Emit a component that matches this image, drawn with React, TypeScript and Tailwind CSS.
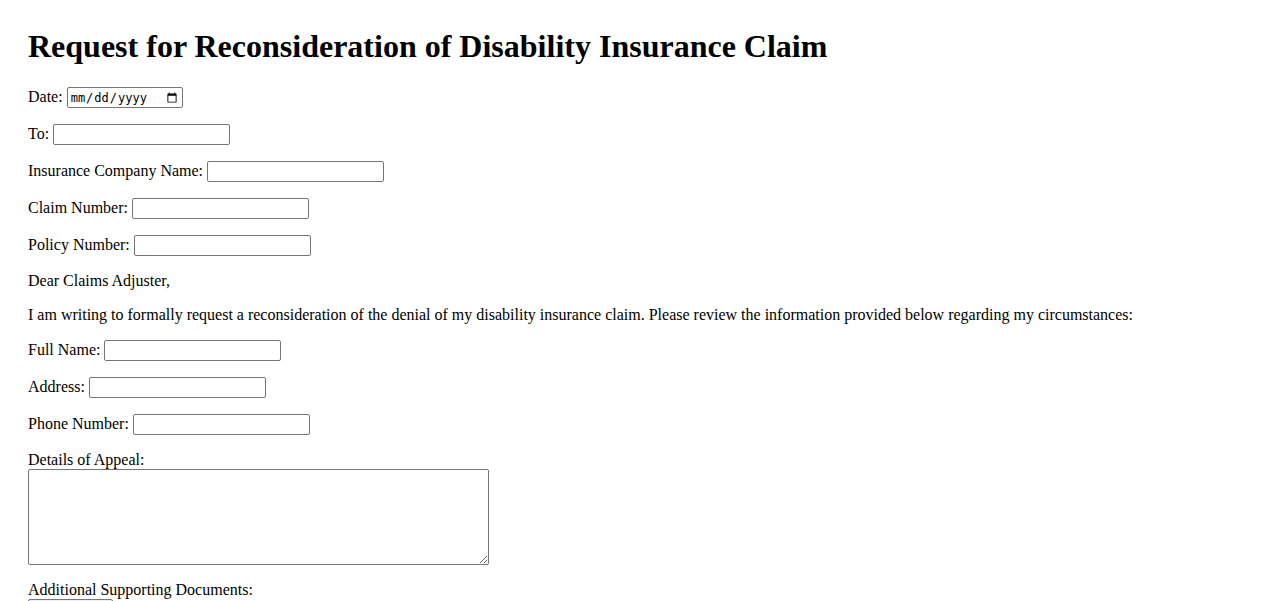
const inputCls =
  "h-[21px] w-[177px] border border-[#767676] rounded-[2px] bg-white px-[2px] py-[1px] text-[13.33px] font-['Liberation_Sans',Arial,sans-serif] text-black";

function Field({ label, type = 'text' }: { label: string; type?: string }) {
  return (
    <div className="mb-[16px]">
      <label>
        {label}{' '}
        <input type={type} className={inputCls} />
      </label>
    </div>
  );
}

export default function App() {
  return (
    <div className="min-h-screen bg-white px-[28px] pt-[28px] font-['Liberation_Serif','Times_New_Roman',serif] text-[16px] leading-[normal] text-black">
      <h1 className="mb-[22px] text-[32px] font-bold leading-[37px]">
        Request for Reconsideration of Disability Insurance Claim
      </h1>

      <div className="mb-[16px]">
        <label>
          Date:{' '}
          <input
            type="date"
            className="h-[21px] w-[116px] rounded-[2px] border border-[#767676] bg-white px-[2px] py-[1px] font-['DejaVu_Sans_Mono',monospace] text-[12px] text-black"
          />
        </label>
      </div>
      <Field label="To:" />
      <Field label="Insurance Company Name:" />
      <Field label="Claim Number:" />
      <Field label="Policy Number:" />

      <p className="mb-[16px]">Dear Claims Adjuster,</p>
      <p className="mb-[16px]">
        I am writing to formally request a reconsideration of the denial of my disability insurance claim. Please
        review the information provided below regarding my circumstances:
      </p>

      <Field label="Full Name:" />
      <Field label="Address:" />
      <Field label="Phone Number:" />

      <div className="mb-[12px]">
        <label>
          Details of Appeal:
          <br />
          <textarea className="h-[96px] w-[461px] rounded-[2px] border border-[#767676] bg-white p-[2px] font-['Liberation_Mono',monospace] text-[13.33px]" />
        </label>
      </div>

      <div className="mb-[16px]">
        <label>
          Additional Supporting Documents:
          <br />
          <input type="file" className="text-[13.33px] font-['Liberation_Sans',Arial,sans-serif] file:mr-1 file:rounded-[2px] file:border file:border-[#767676] file:bg-[#efefef] file:px-[6px] file:py-[1px]" />
        </label>
      </div>
    </div>
  );
}
